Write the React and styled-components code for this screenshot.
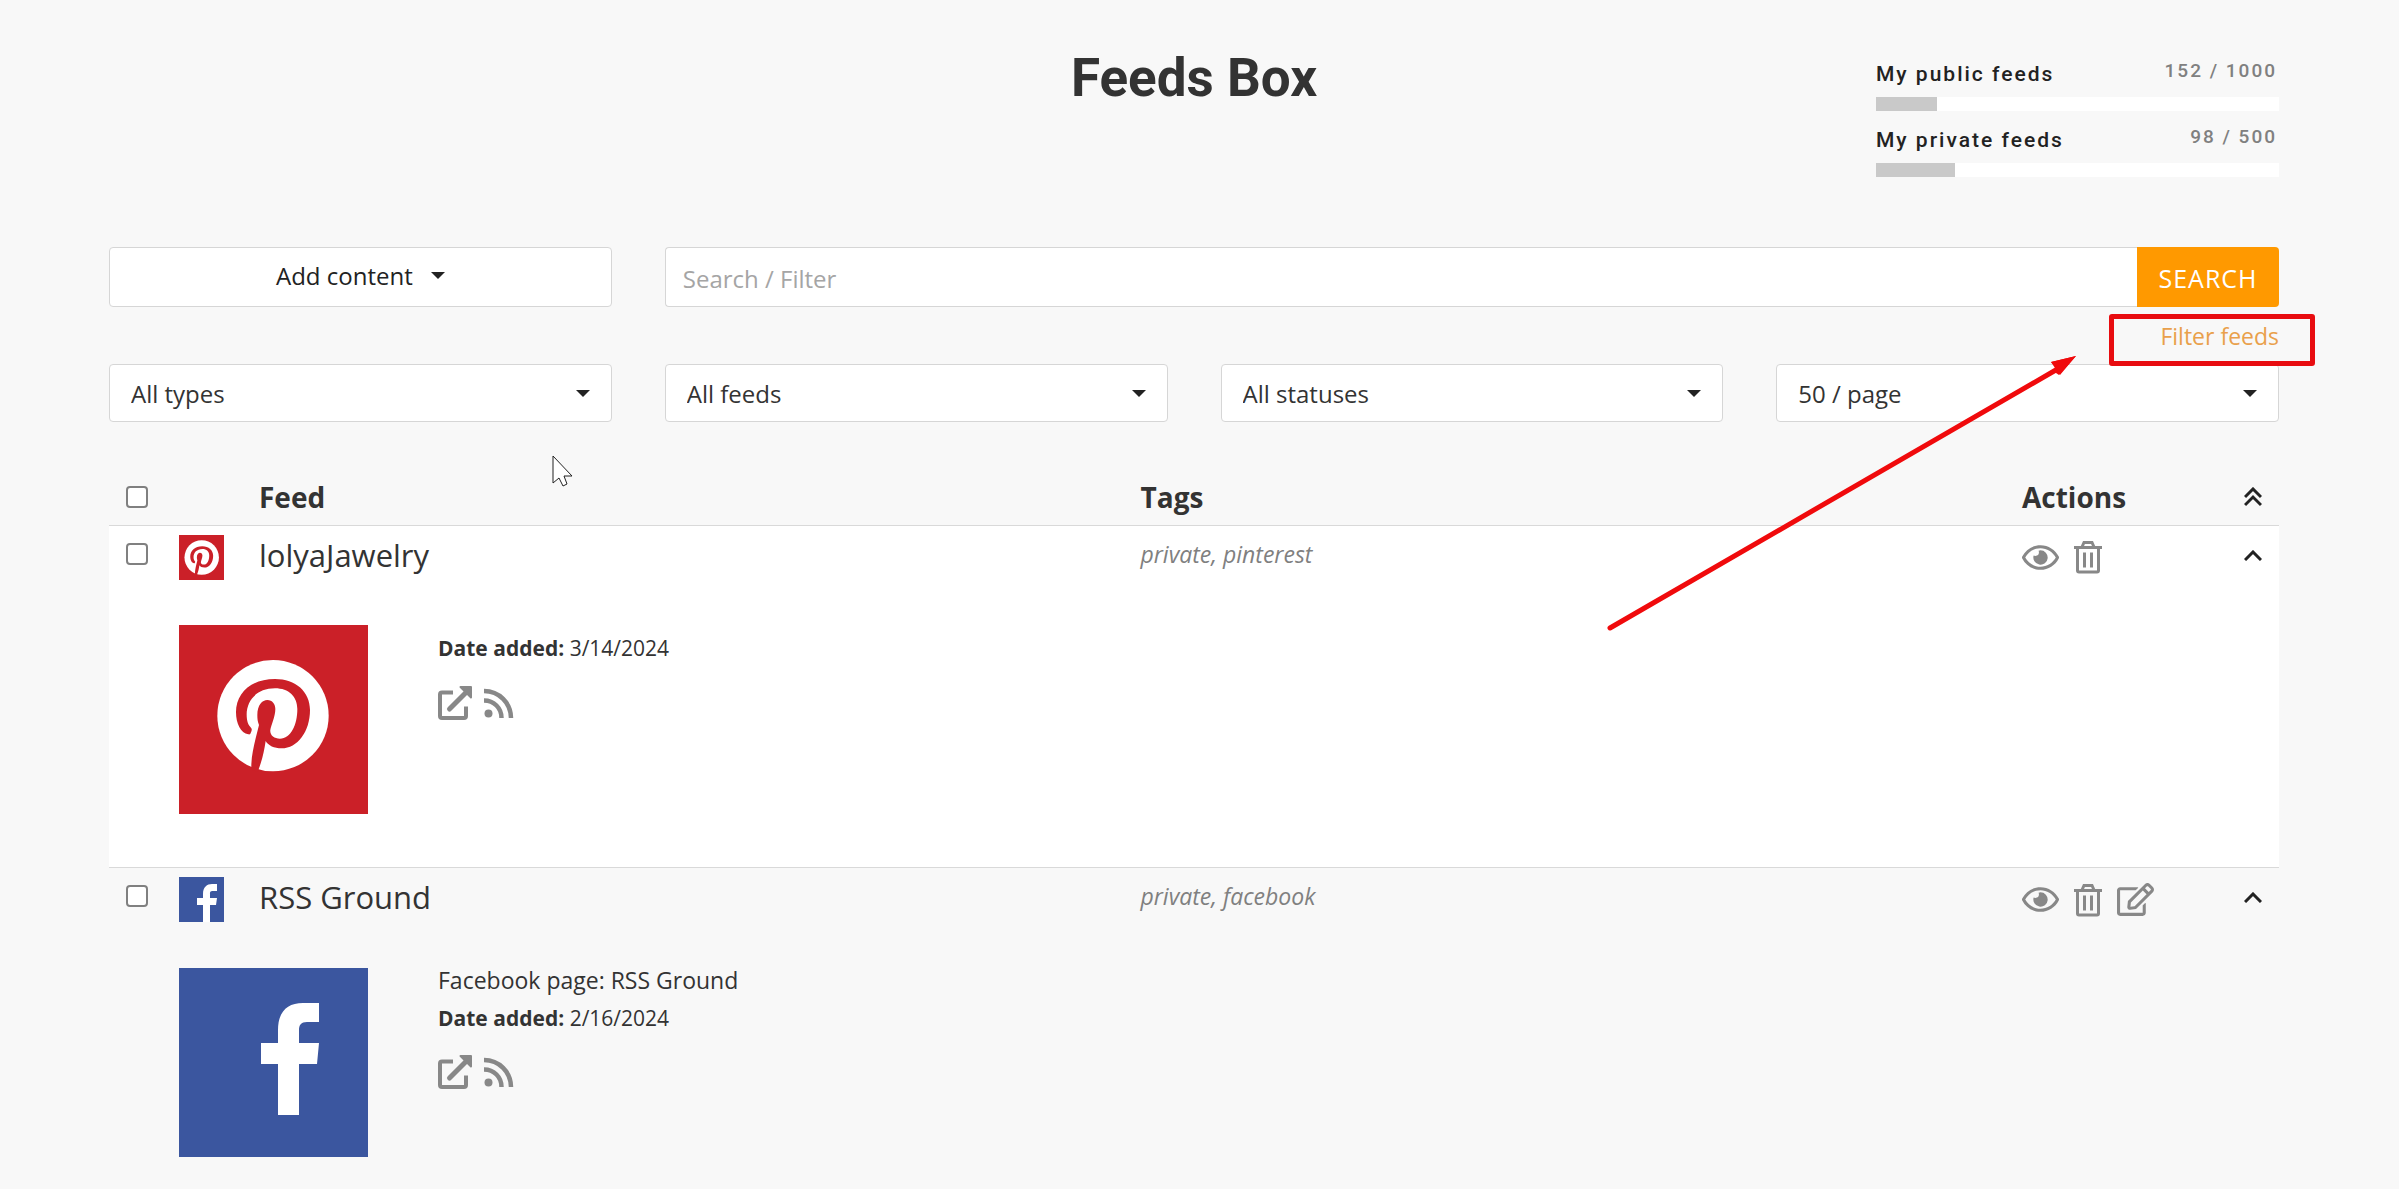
import React from 'react';
import styled, { createGlobalStyle } from 'styled-components';
import { FaRegEye, FaRegEdit } from 'react-icons/fa';

const GlobalStyle = createGlobalStyle`
    * {
        box-sizing: border-box;
    }
    body {
        margin: 0;
        background: #f8f8f8;
        color: #333;
        font-family: 'Open Sans', sans-serif;
        font-size: 24px;
    }
    button, input, select {
        font-family: inherit;
        font-size: inherit;
        color: inherit;
    }
`;

const Page = styled.div`
    position: relative;
    padding: 48px 120px 0 109px;
`;

const Header = styled.header`
    display: grid;
    grid-template-columns: 1fr auto 1fr;
    height: 199px;
`;

const Title = styled.h1`
    grid-column: 2;
    margin: 0;
    font-family: Roboto, sans-serif;
    font-size: 53px;
    font-weight: 700;
    line-height: 60px;
`;

const Quotas = styled.div`
    grid-column: 3;
    justify-self: end;
    width: 403px;
    padding-top: 8px;
    font-family: Roboto, sans-serif;
    letter-spacing: 2px;
`;

const Quota = styled.div`
    margin-bottom: 11px;
`;

const QuotaText = styled.div`
    display: flex;
    justify-content: space-between;
    height: 41px;
    line-height: 30px;
`;

const QuotaLabel = styled.span`
    padding-top: 3px;
    color: #222;
    font-size: 21px;
    font-weight: 500;
`;

const QuotaCount = styled.span`
    padding-right: 2px;
    color: #808080;
    font-size: 19px;
    font-weight: 500;
`;

const QuotaTrack = styled.div`
    height: 14px;
    background: #fff;
`;

const QuotaFill = styled.div`
    height: 14px;
    background: #c9c9c9;
`;

const Controls = styled.div`
    display: grid;
    grid-template-columns: repeat(4, 1fr);
    column-gap: 53px;
`;

const AddButton = styled.button`
    display: flex;
    justify-content: center;
    align-items: center;
    gap: 18px;
    height: 60px;
    padding: 0 0 4px;
    color: #222;
    background: #fff;
    border: 1px solid #d6d6d6;
    border-radius: 4px;
    cursor: pointer;
`;

const SearchForm = styled.form`
    display: flex;
    grid-column: span 3;
    height: 60px;
`;

const SearchInput = styled.input`
    flex: 1;
    min-width: 0;
    padding: 2px 17px 0;
    background: #fff;
    border: 1px solid #d6d6d6;
    border-right: 0;
    border-radius: 4px 0 0 4px;
    &::placeholder {
        color: #a5a5a5;
    }
`;

const SearchButton = styled.button`
    width: 142px;
    padding: 2px 0 0;
    color: #fff;
    font-size: 25px;
    letter-spacing: 1px;
    background: #f90;
    border: 0;
    border-radius: 0 4px 4px 0;
    cursor: pointer;
`;

const FilterRow = styled.div`
    display: flex;
    grid-column: 1 / -1;
    justify-content: flex-end;
    height: 57px;
    padding-top: 12px;
`;

const FilterLink = styled.a`
    position: relative;
    z-index: 1;
    color: #e9a04b;
    font-size: 23px;
    line-height: 34px;
    text-decoration: none;
`;

const SelectWrapper = styled.div`
    display: flex;
    position: relative;
    align-items: center;
`;

const Select = styled.select`
    width: 100%;
    height: 58px;
    padding: 0 21px;
    background: #fff;
    border: 1px solid #d6d6d6;
    border-radius: 4px;
    appearance: none;
`;

const Caret = styled.span`
    width: 0;
    border: 7px solid transparent;
    border-top-color: #222;
    border-bottom: 0;
    pointer-events: none;
`;

const SelectCaret = styled(Caret)`
    position: absolute;
    right: 22px;
`;

const Table = styled.table`
    width: 100%;
    margin-top: 47px;
    border-collapse: collapse;
    table-layout: fixed;
`;

const Col = styled.col`
    width: ${props => props.$width || 'auto'};
`;

const Th = styled.th`
    height: 56px;
    padding: 0;
    font-size: 28px;
    font-weight: 700;
    text-align: left;
    vertical-align: middle;
`;

const FeedBody = styled.tbody`
    background: ${props => props.$white ? '#fff' : 'transparent'};
    border-top: 1px solid #d9d9d9;
`;

const Td = styled.td`
    height: 65px;
    padding: 9px 0 0;
    vertical-align: top;
`;

const Checkbox = styled.input`
    display: block;
    width: 22px;
    height: 22px;
    margin: 0 0 0 17px;
    background: #fff;
    border: 2px solid #808080;
    border-radius: 4px;
    appearance: none;
    &:checked {
        background: #f90;
    }
`;

const RowCheck = styled.div`
    padding-top: 8px;
`;

const Name = styled.div`
    font-size: 31px;
    line-height: 40px;
`;

const TagList = styled.div`
    color: #808080;
    font-size: 23px;
    font-style: italic;
    line-height: 38px;
`;

const Icons = styled.div`
    display: flex;
    align-items: center;
    gap: ${props => props.$gap};
    height: 45px;
    color: #888;
`;

const IconButton = styled.button`
    display: flex;
    padding: 0;
    color: inherit;
    background: none;
    border: 0;
    cursor: pointer;
`;

const ToggleButton = styled(IconButton)`
    margin-left: 12px;
    padding-top: ${props => props.$top || '0'};
    color: #222;
`;

const IconLink = styled.a`
    display: flex;
    color: inherit;
`;

const Details = styled.div`
    display: flex;
    gap: 70px;
    padding: 26px 0 ${props => props.$last ? '30px' : '53px'};
`;

const Info = styled.div`
    padding-top: ${props => props.$lines ? '0' : '8px'};
    font-size: 21px;
    line-height: 30px;
`;

const Description = styled.div`
    padding-bottom: 11px;
    font-size: 23px;
    line-height: 24px;
`;

const InfoIcons = styled(Icons)`
    margin-top: 17px;
`;

const LogoTile = styled.div`
    display: flex;
    flex-shrink: 0;
    width: ${props => props.$size}px;
    height: ${props => props.$size}px;
    color: #fff;
    background: ${props => props.$color};
`;

const Highlight = styled.span`
    position: absolute;
    top: -5px;
    right: -36px;
    width: 206px;
    height: 52px;
    border: 5px solid #e80c10;
    border-radius: 3px;
    pointer-events: none;
`;

const Arrow = styled.svg`
    position: absolute;
    top: 355px;
    right: 321px;
    pointer-events: none;
`;

const Pointer = styled.svg`
    position: absolute;
    top: 455px;
    left: 552px;
    pointer-events: none;
`;

const TrashIcon = () => (
    <svg width='30' height='34' viewBox='0 0 30 34' fill='none' stroke='currentColor' strokeWidth='3'>
        <path d='M1 7.5h28M9 7l2-4.5h8L21 7M4.5 8v22.5a1.5 1.5 0 0 0 1.5 1.5h18a1.5 1.5 0 0 0 1.5-1.5V8M11.5 12.5v15M18.5 12.5v15' />
    </svg>
);

const OpenIcon = () => (
    <svg width='34' height='34' viewBox='0 0 34 34' fill='none' stroke='currentColor'>
        <path d='M15 6.5H4a2 2 0 0 0-2 2V30a2 2 0 0 0 2 2h22a2 2 0 0 0 2-2V20.5' strokeWidth='4' />
        <path d='M11.5 23L28 6.5' strokeWidth='5' strokeLinecap='round' />
        <path d='M22.5 1H33v10.500z' fill='currentColor' strokeWidth='2' strokeLinejoin='round' />
    </svg>
);

const RssIcon = () => (
    <svg width='30' height='30' viewBox='0 0 30 30' fill='none' stroke='currentColor' strokeWidth='4.5'>
        <path d='M0 3c15 0 27 12 27 27M0 12.5c10 0 17.5 7.5 17.5 17.5' />
        <circle cx='4.5' cy='25.5' r='4' fill='currentColor' stroke='none' />
    </svg>
);

const ChevronIcon = ({ double }) => (
    <svg width='18' height={double ? 20 : 11} fill='none' stroke='currentColor' strokeWidth='3'>
        <path d={double ? 'M1 10l8-8 8 8M1 18l8-8 8 8' : 'M1 10l8-8 8 8'} />
    </svg>
);

const PinterestMark = ({ size }) => (
    <svg width={size} height={size} viewBox={size > 100 ? '0 0 567 567' : '62 54 436 436'}>
        <circle cx='282' cy='272' r='167' fill='currentColor' />
        <path
            fill='#cb2028'
            d='M208 328C185 325 171 295 171 262C171 205 215 162 288 162C350 162 393 200 393 255C393 320 355 370 308 370
            C285 370 268 362 260 348C255 380 250 405 236 440L217 434C216 400 222 375 230 340L240 300
            C236 290 235 282 235 270C235 240 250 225 265 225C280 225 289 237 289 252C289 275 276 300 274 315
            C272 330 285 341 303 341C335 341 355 300 355 252C355 215 330 190 288 190C235 190 203 225 203 268
            C203 290 208 300 216 308C220 312 218 318 216 322C214 328 212 329 208 328z'
        />
    </svg>
);

const FacebookMark = ({ size }) => (
    <svg width={size} height={size} viewBox={size > 100 ? '0 0 189 189' : '0 0 45 45'} fill='currentColor'>
        {size > 100
            ? <path d='M99 147V96H82V75h17V62c0-18 9-27 25-27h16v19h-12c-6 0-8 3-8 8v13h20l-2 21h-18v51z' />
            : <path d='M24 45V28h-6v-7h6v-4c0-7 4-10 9-10h5v7h-4c-3 0-3 1-3 3v4h7l-1 7h-6v17z' />}
    </svg>
);

const Logo = ({ type, size }) => (
    <LogoTile $size={size} $color={type === 'pinterest' ? '#cb2028' : '#3b569f'}>
        {type === 'pinterest' ? <PinterestMark size={size} /> : <FacebookMark size={size} />}
    </LogoTile>
);

const quotas = [
    { label: 'My public feeds', used: 152, total: 1000 },
    { label: 'My private feeds', used: 98, total: 500 },
];

const filters = [
    { label: 'Type', value: 'All types' },
    { label: 'Feeds', value: 'All feeds' },
    { label: 'Status', value: 'All statuses' },
    { label: 'Page size', value: '50 / page' },
];

const feeds = [
    { type: 'pinterest', name: 'lolyaJawelry', tags: 'private, pinterest', date: '3/14/2024' },
    { type: 'facebook', name: 'RSS Ground', tags: 'private, facebook', date: '2/16/2024', description: 'Facebook page: RSS Ground', editable: true },
];

const Feed = ({ feed, white, last }) => (
    <FeedBody $white={white}>
        <tr>
            <Td><RowCheck><Checkbox type='checkbox' aria-label={feed.name} /></RowCheck></Td>
            <Td><Logo type={feed.type} size={45} /></Td>
            <Td><Name>{feed.name}</Name></Td>
            <Td><TagList>{feed.tags}</TagList></Td>
            <Td>
                <Icons $gap='14px'>
                    <IconButton aria-label='View'><FaRegEye size={37} /></IconButton>
                    <IconButton aria-label='Delete'><TrashIcon /></IconButton>
                    {feed.editable && <IconButton aria-label='Edit'><FaRegEdit size={37} /></IconButton>}
                </Icons>
            </Td>
            <Td><ToggleButton aria-label='Collapse' $top='15px'><ChevronIcon /></ToggleButton></Td>
        </tr>
        <tr>
            <td></td>
            <Td colSpan='5'>
                <Details $last={last}>
                    <Logo type={feed.type} size={189} />
                    <Info $lines={feed.description}>
                        {feed.description && <Description>{feed.description}</Description>}
                        <div><b>Date added:</b> {feed.date}</div>
                        <InfoIcons $gap='12px'>
                            <IconLink href='#open' aria-label='Open'><OpenIcon /></IconLink>
                            <IconLink href='#rss' aria-label='RSS'><RssIcon /></IconLink>
                        </InfoIcons>
                    </Info>
                </Details>
            </Td>
        </tr>
    </FeedBody>
);

class App extends React.Component {
    render() {
        return (
            <Page>
                <GlobalStyle />
                <Header>
                    <Title>Feeds Box</Title>
                    <Quotas>
                        {quotas.map(({ label, used, total }) => (
                            <Quota key={label}>
                                <QuotaText>
                                    <QuotaLabel>{label}</QuotaLabel>
                                    <QuotaCount>{used} / {total}</QuotaCount>
                                </QuotaText>
                                <QuotaTrack><QuotaFill style={{ width: `${used / total * 100}%` }} /></QuotaTrack>
                            </Quota>
                        ))}
                    </Quotas>
                </Header>
                <Controls>
                    <AddButton>Add content<Caret /></AddButton>
                    <SearchForm>
                        <SearchInput type='text' placeholder='Search / Filter' aria-label='Search / Filter' />
                        <SearchButton type='button'>SEARCH</SearchButton>
                    </SearchForm>
                    <FilterRow>
                        <FilterLink href='#filter'>Filter feeds<Highlight /></FilterLink>
                    </FilterRow>
                    {filters.map(({ label, value }) => (
                        <SelectWrapper key={label}>
                            <Select aria-label={label}><option>{value}</option></Select>
                            <SelectCaret />
                        </SelectWrapper>
                    ))}
                </Controls>
                <Table>
                    <colgroup>
                        <Col $width='70px' />
                        <Col $width='80px' />
                        <Col />
                        <Col />
                        <Col $width='210px' />
                        <Col $width='47px' />
                    </colgroup>
                    <thead>
                        <tr>
                            <Th><Checkbox type='checkbox' aria-label='Select all' /></Th>
                            <Th></Th>
                            <Th>Feed</Th>
                            <Th>Tags</Th>
                            <Th>Actions</Th>
                            <Th><ToggleButton aria-label='Collapse all'><ChevronIcon double /></ToggleButton></Th>
                        </tr>
                    </thead>
                    {feeds.map((feed, i) => (
                        <Feed key={feed.name} feed={feed} white={i % 2 === 0} last={i === feeds.length - 1} />
                    ))}
                </Table>
                <Arrow width='472' height='276' viewBox='0 0 472 276' fill='#f00a0c' stroke='#f00a0c'>
                    <path d='M4 273L455 12' strokeWidth='5' strokeLinecap='round' />
                    <path d='M470 1L445 7l4 6 1 5 3 2z' stroke='none' />
                    <path d='M470 1L445 7l4 4 5 9z' stroke='none' />
                </Arrow>
                <Pointer width='22' height='34' viewBox='0 0 22 34' fill='#fff' stroke='#222' strokeWidth='1'>
                    <path d='M1 1v27l6-5 4 8 4-2-3-8h8z' />
                </Pointer>
            </Page>
        )
    }
}

export default App
